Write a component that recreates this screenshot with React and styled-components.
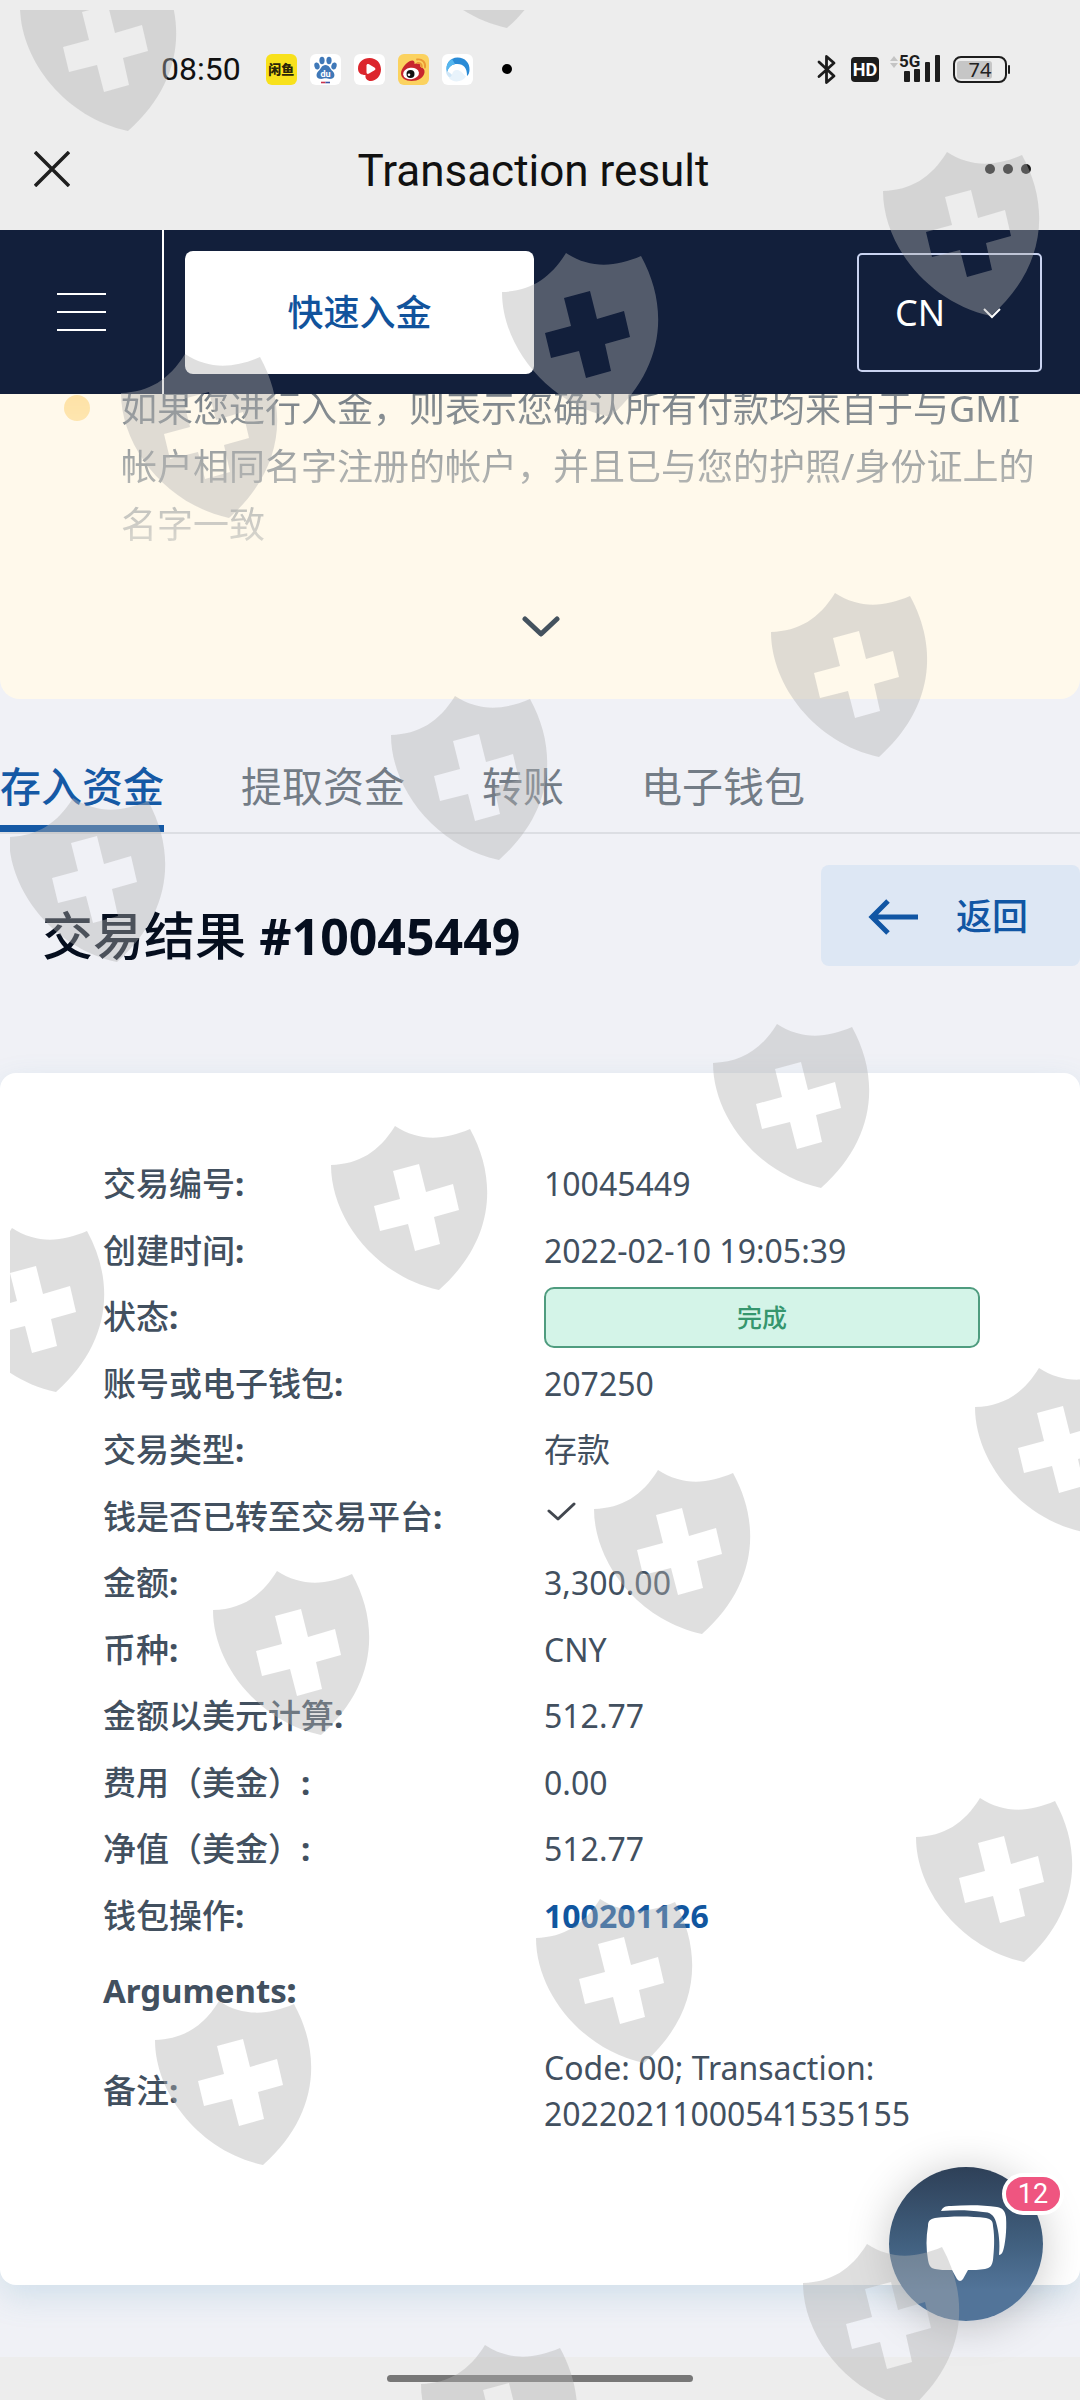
import { useState } from 'react';
import styled, { createGlobalStyle } from 'styled-components';

const GlobalStyle = createGlobalStyle`
  *, *::before, *::after { box-sizing: border-box; }
  body {
    margin: 0;
    background: #f0f1f6;
    font-family: 'Noto Sans', 'Noto Sans CJK SC', sans-serif;
    color: #42505f;
  }
  button, select { font-family: inherit; }
  svg { display: block; }
`;

const Page = styled.div`
  position: relative;
  display: flex;
  flex-direction: column;
  min-height: 100vh;
  overflow: hidden;
`;

// Phone status bar
const StatusBar = styled.div`
  display: flex;
  justify-content: space-between;
  align-items: center;
  height: 108px;
  padding: 30px 70px 0 161px;
  background: #ededed;
  font-family: Roboto, sans-serif;
`;

const StatusGroup = styled.div`
  display: flex;
  align-items: center;
  gap: ${({ $gap }) => $gap}px;
`;

const Clock = styled.time`
  margin-right: 12px;
  font-size: 32px;
  line-height: 36px;
  color: #111;
`;

const AppTile = styled.span`
  display: flex;
  align-items: center;
  justify-content: center;
  width: 31px;
  height: 31px;
  border-radius: 6px;
  background: ${({ $bg }) => $bg || '#fff'};
  font: 900 13px/14px 'Noto Sans CJK SC', sans-serif;
  color: #2a2508;
`;

const Dot = styled.span`
  width: 10px;
  height: 10px;
  margin-left: ${({ $left }) => $left || 0}px;
  border-radius: 50%;
  background: ${({ $color }) => $color || '#1a1a1a'};
`;

// Title bar of the in-app browser
const TitleBar = styled.header`
  display: grid;
  grid-template-columns: 1fr auto 1fr;
  align-items: center;
  height: 122px;
  padding: 0 49px 0 34px;
  background: #ededed;
`;

const PageTitle = styled.span`
  padding: 4px 0 0 2px;
  font: 400 44px/52px Roboto, sans-serif;
  color: #111;
`;

const PlainButton = styled.button`
  display: flex;
  align-items: center;
  justify-content: center;
  gap: 8px;
  padding: 0;
  border: 0;
  background: none;
  justify-self: ${({ $side }) => $side || 'auto'};
`;

const Navbar = styled.nav`
  position: relative;
  z-index: 1;
  display: flex;
  align-items: center;
  height: 164px;
  padding-right: 38px;
  background: #121f3b;
`;

const MenuButton = styled(PlainButton)`
  flex-direction: column;
  gap: 16px;
  width: 164px;
  height: 100%;
  border-right: 2px solid #fff;
`;

const MenuLine = styled.span`
  width: 49px;
  height: 2px;
  background: #fff;
`;

const DepositButton = styled.button`
  width: 349px;
  height: 123px;
  margin: 0 auto 0 21px;
  padding: 2px 0 0;
  border: 0;
  border-radius: 8px;
  background: #fff;
  font-size: 36px;
  line-height: 52px;
  font-weight: 500;
  color: #11539c;
`;

const LanguageBox = styled.label`
  position: relative;
  display: block;

  svg {
    position: absolute;
    right: 41px;
    top: 50%;
    margin-top: -4px;
    pointer-events: none;
  }
`;

const LanguageSelect = styled.select`
  appearance: none;
  width: 185px;
  height: 119px;
  padding: 0 0 0 36px;
  border: 2px solid #c9d3f0;
  border-radius: 5px;
  background: transparent;
  font-size: 36px;
  color: #fff;
`;

const Notice = styled.section`
  margin-top: -14px;
  border-radius: 0 0 20px 20px;
  background: #fff9eb;
`;

const NoticeList = styled.ul`
  margin: 0;
  padding: 0 44px 0 64px;
  list-style: none;
  mask-image: linear-gradient(rgba(0, 0, 0, 0.76), rgba(0, 0, 0, 0.16));
`;

const NoticeItem = styled.li`
  display: flex;
  gap: 31px;
  font-size: 36px;
  line-height: 58px;

  &::before {
    content: '';
    flex: none;
    width: 26px;
    height: 26px;
    margin-top: 15px;
    border-radius: 50%;
    background: #fdd98a;
  }
`;

const ExpandButton = styled(PlainButton)`
  width: 100%;
  height: 145px;
  padding-left: 2px;
`;

const Tabs = styled.nav`
  display: flex;
  gap: 77px;
  margin-top: 60px;
  border-bottom: 2px solid #dcdee3;
`;

const Tab = styled.a`
  padding-bottom: 12px;
  border-bottom: 7px solid ${({ $active }) => ($active ? '#1559a5' : 'transparent')};
  font-size: 41px;
  line-height: 54px;
  font-weight: ${({ $active }) => ($active ? 500 : 400)};
  color: ${({ $active }) => ($active ? '#1559a5' : '#737c86')};
  text-decoration: none;
`;

const Heading = styled.div`
  display: flex;
  justify-content: space-between;
  align-items: flex-start;
  margin: 31px 0 107px;
  padding-left: 42px;
`;

const ResultTitle = styled.h1`
  margin: 40px 0 0;
  font-size: 51px;
  line-height: 60px;
  font-weight: 500;
  color: #050e1e;

  b {
    font-size: 50px;
    font-weight: 700;
  }
`;

const BackButton = styled.button`
  display: flex;
  align-items: center;
  gap: 38px;
  height: 101px;
  padding: 2px 52px 0 47px;
  border: 0;
  border-radius: 8px;
  background: #dde7f4;
  font-size: 36px;
  line-height: 52px;
  font-weight: 500;
  color: #1156a4;
`;

const Card = styled.main`
  padding: 78px 100px 136px 103px;
  margin-bottom: 71px;
  border-radius: 16px;
  background: #fff;
  box-shadow: 0 12px 32px rgba(70, 150, 190, 0.18);
`;

const Details = styled.table`
  width: 100%;
  border-collapse: collapse;
  table-layout: fixed;
  font-size: 33px;
  line-height: 46px;
  text-align: left;
`;

const DetailRow = styled.tr`
  height: ${({ $height }) => $height || 66}px;

  &:nth-child(even) {
    height: ${({ $height }) => $height || 67}px;
  }
`;

const Label = styled.th`
  width: 441px;
  padding: 0;
  font-weight: ${({ $bold }) => ($bold ? 700 : 500)};
`;

const Value = styled.td`
  padding: 0;
  font-size: ${({ $han }) => ($han ? 33 : 32)}px;
`;

const Badge = styled.span`
  display: block;
  height: 61px;
  border: 2px solid #4f9c7f;
  border-radius: 10px;
  background: #d4f4e8;
  font-size: 25px;
  line-height: 57px;
  font-weight: 500;
  text-align: center;
  color: #36966e;
`;

const WalletLink = styled.a`
  font-weight: 700;
  color: #11569f;
  text-decoration: none;
`;

const HomeBar = styled.footer`
  display: flex;
  justify-content: center;
  height: 43px;
  margin-top: auto;
  padding-top: 18px;
  background: #ededed;

  span {
    width: 306px;
    height: 7px;
    border-radius: 4px;
    background: #777;
  }
`;

const ChatButton = styled.button`
  position: absolute;
  right: 37px;
  bottom: 79px;
  width: 154px;
  height: 154px;
  padding: 0;
  border: 0;
  border-radius: 50%;
  background: linear-gradient(#2e4058, #41607f 50%, #527499 80%);
  box-shadow: 0 4px 44px rgba(0, 0, 0, 0.22);
`;

const ChatCount = styled.span`
  position: absolute;
  right: -21px;
  top: 6px;
  width: 62px;
  height: 42px;
  border: 4px solid #fff;
  border-radius: 21px;
  background: #ef5580;
  font: 400 27px/34px Roboto, sans-serif;
  color: #fff;
`;

const Watermark = styled.svg`
  position: absolute;
  left: 10px;
  top: 10px;
  width: calc(100% - 10px);
  height: calc(100% - 10px);
  z-index: 2;
  pointer-events: none;
`;

const shields = [
  [20, -33], [399, -136], [883, 152], [502, 253], [121, 354],
  [771, 593], [391, 696], [9, 798], [713, 1024], [331, 1126],
  [-52, 1228], [975, 1368], [594, 1470], [213, 1571], [916, 1798],
  [536, 1899], [155, 2001], [803, 2244], [421, 2345],
];

const rows = [
  { label: '交易编号', value: '10045449' },
  { label: '创建时间', value: '2022-02-10 19:05:39' },
  { label: '状态', value: <Badge>完成</Badge> },
  { label: '账号或电子钱包', value: '207250' },
  { label: '交易类型', value: '存款', han: true },
  { label: '钱是否已转至交易平台', value: <CheckIcon /> },
  { label: '金额', value: '3,300.00' },
  { label: '币种', value: 'CNY' },
  { label: '金额以美元计算', value: '512.77' },
  { label: '费用（美金）', value: '0.00' },
  { label: '净值（美金）', value: '512.77' },
  { label: '钱包操作', value: <WalletLink href="#wallet">100201126</WalletLink> },
  { label: 'Arguments', value: '', bold: true, height: 84 },
  { label: '备注', value: 'Code: 00; Transaction: 20220211000541535155', height: 116 },
];

const tabs = ['存入资金', '提取资金', '转账', '电子钱包'];

function CheckIcon() {
  return (
    <svg width="32" height="36" viewBox="0 0 32 36" fill="none" stroke="#42474f" strokeWidth="3" strokeLinecap="round" strokeLinejoin="round">
      <path d="M5 12l9 8L30 5" />
    </svg>
  );
}

function BaiduIcon() {
  return (
    <svg width="27" height="29" viewBox="0 0 27 29">
      <g fill="#3f78b8">
        <ellipse cx="5" cy="11" rx="2.6" ry="3.5" transform="rotate(-15 5 11)" />
        <ellipse cx="10" cy="5.5" rx="2.6" ry="3.7" />
        <ellipse cx="17" cy="5.5" rx="2.6" ry="3.7" />
        <ellipse cx="22" cy="11" rx="2.6" ry="3.5" transform="rotate(15 22 11)" />
        <path d="M13.5 10c4 0 4.5 4 7 6s3 7-1 7.8c-3 .5-4-.6-6-.6s-3 1.1-6 .6c-4-.8-3.5-5.8-1-7.8s3-6 7-6z" />
      </g>
      <text x="13.5" y="22" textAnchor="middle" fontFamily="Roboto, sans-serif" fontSize="9" fontWeight="700" fill="#fff">du</text>
      <path d="M9 27.5h4.5" stroke="#c8334e" strokeWidth="1.6" />
      <path d="M13.5 27.5h4.5" stroke="#3d55a6" strokeWidth="1.6" />
    </svg>
  );
}

function VideoIcon() {
  return (
    <svg width="27" height="27" viewBox="0 0 27 27">
      <path d="M13.5 2C20.5 2 25 7 25 13.5S20 25 15 25c-4 0-6-2.500-5.500-6C5 19 2 17 2 12.500 2 6.500 7 2 13.500 2z" fill="#dc262d" />
      <path d="M10.5 9.5c0-1.500 1.200-2 2.500-1.300l5.5 3.300c1.200.8 1.200 2 0 2.800L13 17.600c-1.300.7-2.500.2-2.500-1.300z" fill="#fff" />
    </svg>
  );
}

function WeiboIcon() {
  return (
    <svg width="29" height="27" viewBox="0 0 29 27">
      <path d="M11 5c3-1.500 5 0 4.500 3 3-1.300 6.500-.8 5.800 2.700 3 1 4.700 2.800 4.200 5.800C24.800 21.500 19 25 12.500 25 6.500 25 2 22 2 17.500 2 13 6.500 7.200 11 5z" fill="#c8252d" />
      <ellipse cx="12" cy="17.5" rx="8" ry="5.7" fill="#fff" transform="rotate(-8 12 17.5)" />
      <circle cx="11.5" cy="18" r="4" fill="#111" />
      <circle cx="10" cy="18.8" r="1.3" fill="#fff" />
      <path d="M18 3.5c5-1 9 3 8 8M18.5 7c2.800-.5 4.800 1.500 4.300 4" fill="none" stroke="#ec9a35" strokeWidth="1.8" strokeLinecap="round" />
    </svg>
  );
}

function BrowserIcon() {
  return (
    <svg width="27" height="27" viewBox="0 0 27 27">
      <path d="M2 15a11.5 11.5 0 0 1 8 8.500C6 23 2 19.500 2 15z" fill="#cfe6f7" />
      <path d="M3 16C1 8 6 1.500 13.500 1.500S26 7 25.500 14c-.2 3-1 5-2.500 6 .3-8-3.500-12-9.500-12C8 8 4.500 10.500 3 16z" fill="#2a8bd6" />
      <path d="M3 16C1.500 10 4 5 8 3l3 5C7 9 4.500 11.500 3 16z" fill="#55b6ee" />
      <path d="M5 22c2-1 3-3 3.500-5s2.500-3.500 5-3c3.500.5 5.500 4 8.500 6.500C18 26.500 9 27 5 22z" fill="#e8f3fb" />
    </svg>
  );
}

function PhoneIcons() {
  return (
    <svg width="194" height="44" viewBox="816 46 194 44" aria-label="Bluetooth, HD, 5G, 74%">
      <path d="M819 61l15 14-7.500 6.500v-26L834 62l-15 13.500" fill="none" stroke="#1d1d1d" strokeWidth="2.8" strokeLinejoin="round" strokeLinecap="round" />
      <rect x="851" y="56" width="28" height="25" rx="4" fill="#1d1d1d" />
      <text x="865" y="75" textAnchor="middle" fontFamily="Roboto, sans-serif" fontWeight="700" fontSize="18" fill="#fff">HD</text>
      <path d="M890 60l4-5 4 5zM890 62l4 5 4-5z" fill="#c4c4c4" />
      <g fill="#1d1d1d">
        <rect x="904" y="70" width="6" height="11" rx="1" />
        <rect x="914" y="68" width="6" height="13" rx="1" />
        <rect x="925" y="61" width="5" height="20" rx="1" />
        <rect x="935" y="54" width="5" height="27" rx="1" />
        <text x="899" y="66" fontFamily="Roboto, sans-serif" fontWeight="700" fontSize="17">5G</text>
        <rect x="1008" y="64" width="2" height="9" rx="1" />
      </g>
      <rect x="957" y="60" width="35" height="18" rx="3" fill="#c6c6c6" />
      <rect x="954" y="56" width="52" height="25" rx="7" fill="none" stroke="#1d1d1d" strokeWidth="2" />
      <text x="980" y="76" textAnchor="middle" fontFamily="'Noto Sans', sans-serif" fontSize="20" fill="#222">74</text>
    </svg>
  );
}

function ShieldWatermark() {
  return (
    <Watermark aria-hidden="true">
      <g fill="rgb(178,178,178)" fillOpacity="0.41" fillRule="evenodd">
        {shields.map(([x, y]) => (
          <path
            key={`${x}-${y}`}
            transform={`translate(${x - 10} ${y - 10})`}
            d="M0 39C28 38 48 26 64 0C88 16 114 14 139 3C168 56 162 116 108 164C44 150 0 92 0 39ZM62 45L88 38L95 66L122 58L128 84L103 91L109 118L84 125L77 98L49 105L43 80L69 73Z"
          />
        ))}
      </g>
    </Watermark>
  );
}

export default function App() {
  const [activeTab, setActiveTab] = useState(0);

  return (
    <Page>
      <GlobalStyle />
      <StatusBar>
        <StatusGroup $gap={13}>
          <Clock>08:50</Clock>
          <AppTile $bg="#f8e11c">闲鱼</AppTile>
          <AppTile><BaiduIcon /></AppTile>
          <AppTile><VideoIcon /></AppTile>
          <AppTile $bg="#fbd25f"><WeiboIcon /></AppTile>
          <AppTile><BrowserIcon /></AppTile>
          <Dot $left={16} $color="#000" />
        </StatusGroup>
        <PhoneIcons />
      </StatusBar>

      <TitleBar>
        <PlainButton type="button" aria-label="Close" $side="start">
          <svg width="36" height="36" viewBox="0 0 36 36" stroke="#1f1f1f" strokeWidth="3.5">
            <path d="M1 1l34 34M35 1L1 35" />
          </svg>
        </PlainButton>
        <PageTitle>Transaction result</PageTitle>
        <PlainButton type="button" aria-label="More" $side="end">
          <Dot />
          <Dot />
          <Dot />
        </PlainButton>
      </TitleBar>

      <Navbar>
        <MenuButton type="button" aria-label="Menu">
          <MenuLine />
          <MenuLine />
          <MenuLine />
        </MenuButton>
        <DepositButton type="button">快速入金</DepositButton>
        <LanguageBox>
          <LanguageSelect aria-label="Language" defaultValue="CN">
            <option>CN</option>
            <option>EN</option>
          </LanguageSelect>
          <svg width="18" height="11" viewBox="0 0 18 11" fill="none" stroke="#fff" strokeWidth="2">
            <path d="M1 1l8 8 8-8" />
          </svg>
        </LanguageBox>
      </Navbar>

      <Notice>
        <NoticeList>
          <NoticeItem>
            如果您进行入金，则表示您确认所有付款均来自于与GMI帐户相同名字注册的帐户，并且已与您的护照/身份证上的名字一致
          </NoticeItem>
        </NoticeList>
        <ExpandButton type="button" aria-label="展开">
          <svg width="38" height="22" viewBox="0 0 38 22" fill="none" stroke="#44525e" strokeWidth="5" strokeLinecap="round" strokeLinejoin="round">
            <path d="M3 3l16 15L35 3" />
          </svg>
        </ExpandButton>
      </Notice>

      <Tabs>
        {tabs.map((name, i) => (
          <Tab key={name} href="#tab" $active={i === activeTab} onClick={() => setActiveTab(i)}>
            {name}
          </Tab>
        ))}
      </Tabs>

      <Heading>
        <ResultTitle>
          交易结果 <b>#10045449</b>
        </ResultTitle>
        <BackButton type="button">
          <svg width="50" height="36" viewBox="0 0 50 36" fill="none" stroke="#1156a4" strokeWidth="5">
            <path d="M20 2L4 18l16 16M4 18h46" />
          </svg>
          返回
        </BackButton>
      </Heading>

      <Card>
        <Details>
          <tbody>
            {rows.map((row) => (
              <DetailRow key={row.label} $height={row.height}>
                <Label scope="row" $bold={row.bold}>{row.label}<b>:</b></Label>
                <Value $han={row.han}>{row.value}</Value>
              </DetailRow>
            ))}
          </tbody>
        </Details>
      </Card>

      <HomeBar>
        <span />
      </HomeBar>

      <ChatButton type="button" aria-label="Chat">
        <svg width="154" height="154" viewBox="0 0 154 154" fill="#fff">
          <path d="M52 44C54 40 56 39 62 39C78 38 94 38 108 40C114 41 116 44 117 50C118 64 116 78 114 84C113 87 111 88 110 88C111 76 110 66 107 55C105 48 101 45 94 45C80 43 66 43 52 44Z" />
          <path d="M46 51C62 49 82 49 97 51C102 52 104 54 104 59C106 71 105 84 104 93C103 99 101 101 96 102C90 103 84 103 79 103L74 112Q71 116 68 112L63 103C56 103 50 103 46 102C41 101 40 98 39 93C37 82 37 70 39 59C39 54 41 52 46 51Z" />
        </svg>
        <ChatCount>12</ChatCount>
      </ChatButton>

      <ShieldWatermark />
    </Page>
  );
}
